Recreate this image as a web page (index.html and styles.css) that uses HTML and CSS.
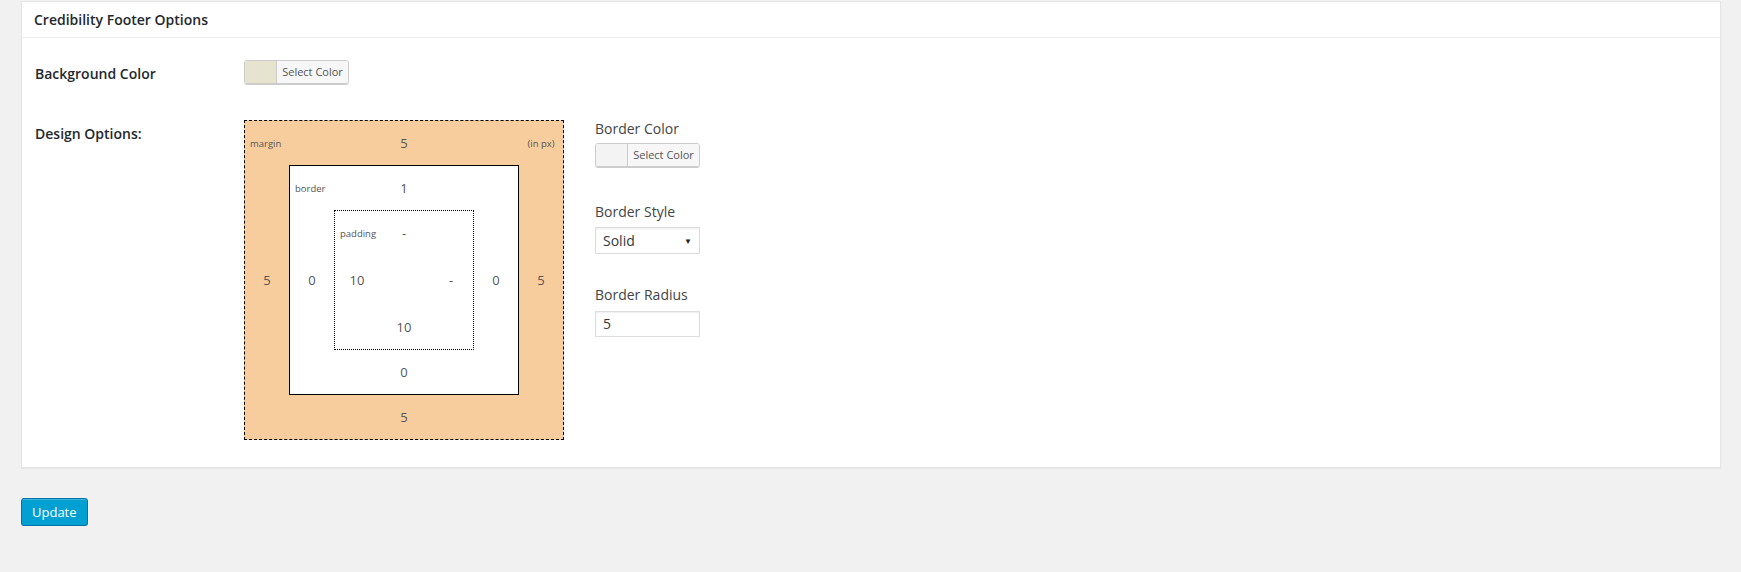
FILE: index.html
```html
<!DOCTYPE html>
<html>
<head>
<meta charset="utf-8">
<link rel="stylesheet" href="styles.css">
</head>
<body>
<div class="wrap">
  <div class="panel">
    <div class="panel-head">Credibility Footer Options</div>
    <div class="panel-body">
      <div class="row row-bg">
        <div class="label label-bg">Background Color</div>
        <div class="color-btn"><span class="swatch swatch-bg"></span><span class="btn-text">Select Color</span></div>
      </div>
      <div class="row row-design">
        <div class="label label-design">Design Options:</div>
        <div class="box box-margin">
          <div class="cell corner"><span class="tag">margin</span></div>
          <div class="cell num">5</div>
          <div class="cell corner-r"><span class="tag">(in px)</span></div>
          <div class="cell num">5</div>
          <div class="box box-border">
            <div class="cell corner"><span class="tag">border</span></div>
            <div class="cell num">1</div>
            <div class="cell"></div>
            <div class="cell num">0</div>
            <div class="box box-padding">
              <div class="cell corner"><span class="tag">padding</span></div>
              <div class="cell num">-</div>
              <div class="cell"></div>
              <div class="cell num">10</div>
              <div class="cell"></div>
              <div class="cell num">-</div>
              <div class="cell"></div>
              <div class="cell num">10</div>
              <div class="cell"></div>
            </div>
            <div class="cell num">0</div>
            <div class="cell"></div>
            <div class="cell num">0</div>
            <div class="cell"></div>
          </div>
          <div class="cell num">5</div>
          <div class="cell"></div>
          <div class="cell num">5</div>
          <div class="cell"></div>
        </div>
        <div class="side">
          <div class="side-label">Border Color</div>
          <div class="color-btn"><span class="swatch swatch-empty"></span><span class="btn-text">Select Color</span></div>
          <div class="side-label side-gap">Border Style</div>
          <div class="select"><span>Solid</span><span class="arrow">&#9660;</span></div>
          <div class="side-label side-gap2">Border Radius</div>
          <div class="input">5</div>
        </div>
      </div>
    </div>
  </div>
  <div class="actions"><span class="update">Update</span></div>
</div>
</body>
</html>
```
FILE: styles.css
```css
html, body {
  margin: 0;
  padding: 0;
  background: #f1f1f1;
  font-family: "Open Sans", "Liberation Sans", sans-serif;
  color: #444;
}
.wrap {
  padding: 1px 20px 0 21px;
}
.panel {
  background: #fff;
  border: 1px solid #e5e5e5;
  box-shadow: 0 1px 1px rgba(0,0,0,.04);
}
.panel-head {
  height: 35px;
  line-height: 35px;
  padding: 0 12px;
  font-size: 14px;
  font-weight: 600;
  color: #23282d;
  border-bottom: 1px solid #eee;
}
.panel-body {
  padding: 22px 13px 27px 13px;
}
.row {
  display: flex;
  align-items: flex-start;
}
.row-design {
  margin-top: 34px;
}
.label {
  width: 209px;
  flex: none;
  font-size: 14px;
  font-weight: 600;
  color: #23282d;
  line-height: 24px;
}
.label-bg {
  padding-top: 2px;
}
.label-design {
  line-height: 26px;
  padding-top: 1px;
}
.color-btn {
  display: flex;
  width: 103px;
  height: 22px;
  border: 1px solid #ccc;
  border-radius: 3px;
  box-shadow: 0 1px 0 #ccc;
  overflow: hidden;
  box-sizing: content-box;
}
.swatch {
  width: 31px;
  flex: none;
}
.swatch-bg { background: #e6e3cf; }
.swatch-empty { background: #f3f3f3; }
.btn-text {
  flex: 1;
  background: #f7f7f7;
  border-left: 1px solid #ccc;
  font-size: 11px;
  color: #555;
  line-height: 22px;
  text-align: center;
}
.box {
  display: grid;
  grid-template-columns: 44px 1fr 44px;
  grid-template-rows: 44px 1fr 44px;
  box-sizing: border-box;
}
.box-margin {
  width: 320px;
  height: 320px;
  flex: none;
  background: #f8cd9d;
  border: 1px dashed #000;
}
.box-border {
  background: #fff;
  border: 1px solid #000;
}
.box-padding {
  background: #fff;
  border: 1px dotted #000;
}
.cell {
  display: flex;
  align-items: center;
  justify-content: center;
  min-width: 0;
}
.num {
  font-size: 13px;
  color: #555;
}
.corner {
  justify-content: flex-start;
  padding-left: 5px;
}
.corner-r {
  justify-content: center;
}
.tag {
  font-size: 9.5px;
  color: #555;
  white-space: nowrap;
}
.side {
  margin-left: 31px;
  display: flex;
  flex-direction: column;
  align-items: flex-start;
}
.side-label {
  font-size: 14px;
  line-height: 18px;
  color: #444;
  margin-bottom: 5px;
}
.side-gap {
  margin-top: 36px;
  margin-bottom: 6px;
}
.side-gap2 {
  margin-top: 32px;
  margin-bottom: 7px;
}
.select {
  width: 105px;
  height: 27px;
  box-sizing: border-box;
  border: 1px solid #ddd;
  box-shadow: inset 0 1px 2px rgba(0,0,0,.07);
  display: flex;
  align-items: center;
  justify-content: space-between;
  padding: 0 7px 0 7px;
  font-size: 14px;
  color: #32373c;
}
.arrow {
  font-size: 8px;
  color: #222;
}
.input {
  width: 105px;
  height: 26px;
  box-sizing: border-box;
  border: 1px solid #ddd;
  box-shadow: inset 0 1px 2px rgba(0,0,0,.07);
  padding: 0 7px;
  font-size: 14px;
  line-height: 24px;
  color: #32373c;
}
.actions {
  margin-top: 30px;
}
.update {
  display: inline-block;
  height: 28px;
  box-sizing: border-box;
  line-height: 26px;
  padding: 0 10px;
  background: #00a0d2;
  border: 1px solid #0073aa;
  border-radius: 3px;
  box-shadow: inset 0 1px 0 rgba(120,200,230,.5), 0 1px 0 rgba(0,0,0,.15);
  color: #fff;
  font-size: 13px;
  font-weight: 400;
}
```
